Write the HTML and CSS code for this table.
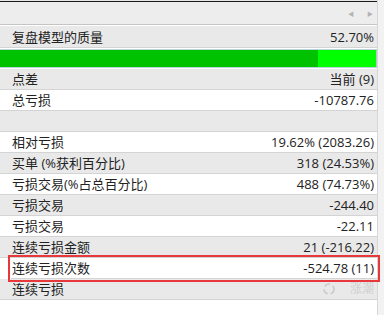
FILE: index.html
```html
<!DOCTYPE html>
<html lang="zh">
<head>
<meta charset="utf-8">
<link rel="stylesheet" href="styles.css">
</head>
<body>
<div class="frame">
  <div class="main">
    <div class="topline"></div>
    <div class="header">
      <span class="arrow">&#9664;</span>
      <span class="arrow">&#9654;</span>
    </div>
    <div class="row gray first"><span>复盘模型的质量</span><span>52.70%</span></div>
    <div class="bar"><div class="fill" style="width:84.5%"></div></div>
    <div class="row gray"><span>点差</span><span>当前 (9)</span></div>
    <div class="row white"><span>总亏损</span><span>-10787.76</span></div>
    <div class="row gray"><span></span><span></span></div>
    <div class="row white"><span>相对亏损</span><span>19.62% (2083.26)</span></div>
    <div class="row gray"><span>买单 (%获利百分比)</span><span>318 (24.53%)</span></div>
    <div class="row white"><span>亏损交易(%占总百分比)</span><span>488 (74.73%)</span></div>
    <div class="row gray"><span>亏损交易</span><span>-244.40</span></div>
    <div class="row white"><span>亏损交易</span><span>-22.11</span></div>
    <div class="row gray"><span>连续亏损金额</span><span>21 (-216.22)</span></div>
    <div class="row white highlight"><span>连续亏损次数</span><span>-524.78 (11)</span></div>
    <div class="row gray"><span>连续亏损</span><span class="mark"><svg width="14" height="14" viewBox="0 0 14 14"><circle cx="7" cy="7" r="5" fill="none" stroke="#c8c8c8" stroke-width="1.5" stroke-dasharray="6 3"/></svg><span class="wm">涨潮</span></span></div>
  </div>
  <div class="scroll"></div>
</div>
</body>
</html>
```
FILE: styles.css
```css
html, body {
  margin: 0;
  padding: 0;
  background: #ffffff;
}
body {
  width: 384px;
  height: 315px;
  overflow: hidden;
  font-family: "Open Sans", "Noto Sans CJK SC", sans-serif;
  font-size: 13px;
  color: #222222;
}
.frame {
  display: flex;
  height: 315px;
}
.main {
  width: 377px;
  display: flex;
  flex-direction: column;
}
.scroll {
  width: 7px;
  background: #f2f2f2;
  border-left: 1px solid #d6d6d6;
  box-sizing: border-box;
}
.topline {
  height: 1px;
  background: #1a1a1a;
  border-top: 1px solid #e8e8e8;
}
.header {
  height: 22px;
  background: #ededed;
  border-bottom: 1px solid #c4c4c4;
  display: flex;
  justify-content: flex-end;
  align-items: center;
  gap: 13px;
  padding-right: 4px;
}
.arrow {
  font-size: 6px;
  color: #b4b4b4;
}
.row {
  height: 20px;
  border-bottom: 1px solid #d4d4d4;
  display: flex;
  justify-content: space-between;
  align-items: center;
  padding: 0 3px 0 12px;
  line-height: 20px;
  white-space: nowrap;
}
.row.first {
  height: 21px;
  border-top: 1px solid #ffffff;
}
.gray {
  background: #e9e9e9;
}
.white {
  background: #ffffff;
}
.bar {
  height: 17px;
  margin: 1px 0 1px 0;
  background: #00ff00;
  border-top: 1px solid #b8d4dc;
  border-bottom: 1px solid #b8d4dc;
  border-right: 1px solid #b8c8c8;
  display: flex;
}
.fill {
  height: 100%;
  background: #00c200;
}
.highlight {
  outline: 2px solid #e8383c;
  outline-offset: 1px;
  margin-left: 11px;
  padding-left: 1px;
  position: relative;
  z-index: 1;
}
.mark {
  display: flex;
  align-items: center;
  gap: 14px;
}
.wm {
  color: #d0d0d0;
  font-size: 12px;
}
```
